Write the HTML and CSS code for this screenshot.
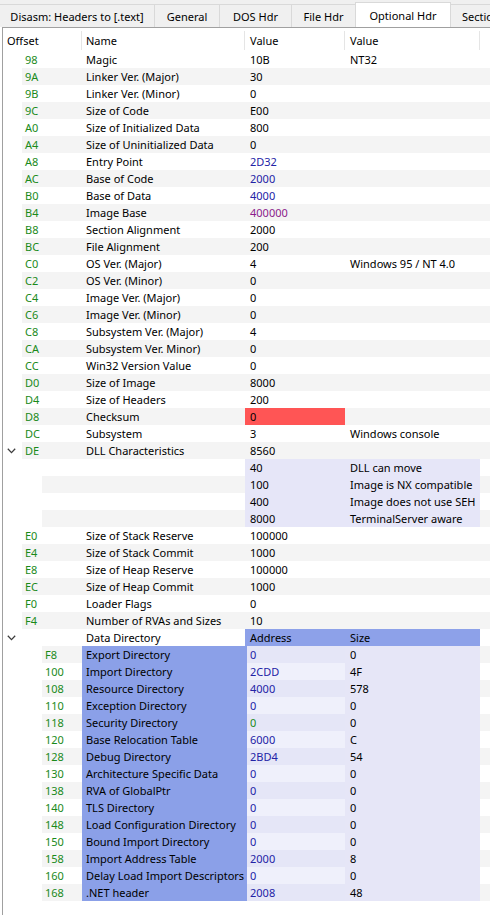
FILE: index.html
```html
<!DOCTYPE html>
<html lang="en">
<head>
    <meta charset="UTF-8">
    <title>Optional Hdr</title>
    <link rel="stylesheet" href="styles.css">
</head>
<body>
    <div class="tabbar">
        <div class="tab t-disasm">Disasm: Headers to [.text]</div>
        <div class="tab t-general">General</div>
        <div class="tab t-dos">DOS Hdr</div>
        <div class="tab t-file">File Hdr</div>
        <div class="tab t-opt active">Optional Hdr</div>
        <div class="tab t-sect">Section Hdrs</div>
    </div>

    <div class="panel">
        <div class="head">
            <div class="h h-off">Offset</div>
            <div class="h h-name">Name</div>
            <div class="h h-val">Value</div>
            <div class="h h-val2">Value</div>
            <div class="h-fill"></div>
        </div>

        <div class="rows">
            <div class="row"><span class="ind"></span><div class="cells"><span class="off">98</span><span class="name">Magic</span><span class="val">10B</span><span class="val2">NT32</span><span class="fill"></span></div></div>
            <div class="row"><span class="ind"></span><div class="cells"><span class="off">9A</span><span class="name">Linker Ver. (Major)</span><span class="val">30</span><span class="val2"></span><span class="fill"></span></div></div>
            <div class="row"><span class="ind"></span><div class="cells"><span class="off">9B</span><span class="name">Linker Ver. (Minor)</span><span class="val">0</span><span class="val2"></span><span class="fill"></span></div></div>
            <div class="row"><span class="ind"></span><div class="cells"><span class="off">9C</span><span class="name">Size of Code</span><span class="val">E00</span><span class="val2"></span><span class="fill"></span></div></div>
            <div class="row"><span class="ind"></span><div class="cells"><span class="off">A0</span><span class="name">Size of Initialized Data</span><span class="val">800</span><span class="val2"></span><span class="fill"></span></div></div>
            <div class="row"><span class="ind"></span><div class="cells"><span class="off">A4</span><span class="name">Size of Uninitialized Data</span><span class="val">0</span><span class="val2"></span><span class="fill"></span></div></div>
            <div class="row"><span class="ind"></span><div class="cells"><span class="off">A8</span><span class="name">Entry Point</span><span class="val blue">2D32</span><span class="val2"></span><span class="fill"></span></div></div>
            <div class="row"><span class="ind"></span><div class="cells"><span class="off">AC</span><span class="name">Base of Code</span><span class="val blue">2000</span><span class="val2"></span><span class="fill"></span></div></div>
            <div class="row"><span class="ind"></span><div class="cells"><span class="off">B0</span><span class="name">Base of Data</span><span class="val blue">4000</span><span class="val2"></span><span class="fill"></span></div></div>
            <div class="row"><span class="ind"></span><div class="cells"><span class="off">B4</span><span class="name">Image Base</span><span class="val purple">400000</span><span class="val2"></span><span class="fill"></span></div></div>
            <div class="row"><span class="ind"></span><div class="cells"><span class="off">B8</span><span class="name">Section Alignment</span><span class="val">2000</span><span class="val2"></span><span class="fill"></span></div></div>
            <div class="row"><span class="ind"></span><div class="cells"><span class="off">BC</span><span class="name">File Alignment</span><span class="val">200</span><span class="val2"></span><span class="fill"></span></div></div>
            <div class="row"><span class="ind"></span><div class="cells"><span class="off">C0</span><span class="name">OS Ver. (Major)</span><span class="val">4</span><span class="val2">Windows 95 / NT 4.0</span><span class="fill"></span></div></div>
            <div class="row"><span class="ind"></span><div class="cells"><span class="off">C2</span><span class="name">OS Ver. (Minor)</span><span class="val">0</span><span class="val2"></span><span class="fill"></span></div></div>
            <div class="row"><span class="ind"></span><div class="cells"><span class="off">C4</span><span class="name">Image Ver. (Major)</span><span class="val">0</span><span class="val2"></span><span class="fill"></span></div></div>
            <div class="row"><span class="ind"></span><div class="cells"><span class="off">C6</span><span class="name">Image Ver. (Minor)</span><span class="val">0</span><span class="val2"></span><span class="fill"></span></div></div>
            <div class="row"><span class="ind"></span><div class="cells"><span class="off">C8</span><span class="name">Subsystem Ver. (Major)</span><span class="val">4</span><span class="val2"></span><span class="fill"></span></div></div>
            <div class="row"><span class="ind"></span><div class="cells"><span class="off">CA</span><span class="name">Subsystem Ver. Minor)</span><span class="val">0</span><span class="val2"></span><span class="fill"></span></div></div>
            <div class="row"><span class="ind"></span><div class="cells"><span class="off">CC</span><span class="name">Win32 Version Value</span><span class="val">0</span><span class="val2"></span><span class="fill"></span></div></div>
            <div class="row"><span class="ind"></span><div class="cells"><span class="off">D0</span><span class="name">Size of Image</span><span class="val">8000</span><span class="val2"></span><span class="fill"></span></div></div>
            <div class="row"><span class="ind"></span><div class="cells"><span class="off">D4</span><span class="name">Size of Headers</span><span class="val">200</span><span class="val2"></span><span class="fill"></span></div></div>
            <div class="row"><span class="ind"></span><div class="cells"><span class="off">D8</span><span class="name">Checksum</span><span class="val bad">0</span><span class="val2"></span><span class="fill"></span></div></div>
            <div class="row"><span class="ind"></span><div class="cells"><span class="off">DC</span><span class="name">Subsystem</span><span class="val">3</span><span class="val2">Windows console</span><span class="fill"></span></div></div>
            <div class="row"><span class="ind"><svg class="chev" width="9" height="6" viewBox="0 0 9 6"><polyline points="0.8,0.8 4.5,4.6 8.2,0.8" /></svg></span><div class="cells"><span class="off">DE</span><span class="name">DLL Characteristics</span><span class="val">8560</span><span class="val2"></span><span class="fill"></span></div></div>
            <!-- DLL characteristics flags -->
            <div class="row flag"><span class="ind l2"></span><div class="cells"><span class="off"></span><span class="name"></span><span class="val">40</span><span class="val2">DLL can move</span><span class="fill"></span></div></div>
            <div class="row flag"><span class="ind l2"></span><div class="cells"><span class="off"></span><span class="name"></span><span class="val">100</span><span class="val2">Image is NX compatible</span><span class="fill"></span></div></div>
            <div class="row flag"><span class="ind l2"></span><div class="cells"><span class="off"></span><span class="name"></span><span class="val">400</span><span class="val2">Image does not use SEH</span><span class="fill"></span></div></div>
            <div class="row flag"><span class="ind l2"></span><div class="cells"><span class="off"></span><span class="name"></span><span class="val">8000</span><span class="val2">TerminalServer aware</span><span class="fill"></span></div></div>
            <div class="row"><span class="ind"></span><div class="cells"><span class="off">E0</span><span class="name">Size of Stack Reserve</span><span class="val">100000</span><span class="val2"></span><span class="fill"></span></div></div>
            <div class="row"><span class="ind"></span><div class="cells"><span class="off">E4</span><span class="name">Size of Stack Commit</span><span class="val">1000</span><span class="val2"></span><span class="fill"></span></div></div>
            <div class="row"><span class="ind"></span><div class="cells"><span class="off">E8</span><span class="name">Size of Heap Reserve</span><span class="val">100000</span><span class="val2"></span><span class="fill"></span></div></div>
            <div class="row"><span class="ind"></span><div class="cells"><span class="off">EC</span><span class="name">Size of Heap Commit</span><span class="val">1000</span><span class="val2"></span><span class="fill"></span></div></div>
            <div class="row"><span class="ind"></span><div class="cells"><span class="off">F0</span><span class="name">Loader Flags</span><span class="val">0</span><span class="val2"></span><span class="fill"></span></div></div>
            <div class="row"><span class="ind"></span><div class="cells"><span class="off">F4</span><span class="name">Number of RVAs and Sizes</span><span class="val">10</span><span class="val2"></span><span class="fill"></span></div></div>
            <div class="row dirhead"><span class="ind"><svg class="chev" width="9" height="6" viewBox="0 0 9 6"><polyline points="0.8,0.8 4.5,4.6 8.2,0.8" /></svg></span><div class="cells"><span class="off"></span><span class="name">Data Directory</span><span class="val">Address</span><span class="val2">Size</span><span class="fill"></span></div></div>
            <!-- data directory entries -->
            <div class="row dir"><span class="ind l2"></span><div class="cells"><span class="off">F8</span><span class="name">Export Directory</span><span class="val blue">0</span><span class="val2">0</span><span class="fill"></span></div></div>
            <div class="row dir"><span class="ind l2"></span><div class="cells"><span class="off">100</span><span class="name">Import Directory</span><span class="val blue">2CDD</span><span class="val2">4F</span><span class="fill"></span></div></div>
            <div class="row dir"><span class="ind l2"></span><div class="cells"><span class="off">108</span><span class="name">Resource Directory</span><span class="val blue">4000</span><span class="val2">578</span><span class="fill"></span></div></div>
            <div class="row dir"><span class="ind l2"></span><div class="cells"><span class="off">110</span><span class="name">Exception Directory</span><span class="val blue">0</span><span class="val2">0</span><span class="fill"></span></div></div>
            <div class="row dir"><span class="ind l2"></span><div class="cells"><span class="off">118</span><span class="name">Security Directory</span><span class="val green">0</span><span class="val2">0</span><span class="fill"></span></div></div>
            <div class="row dir"><span class="ind l2"></span><div class="cells"><span class="off">120</span><span class="name">Base Relocation Table</span><span class="val blue">6000</span><span class="val2">C</span><span class="fill"></span></div></div>
            <div class="row dir"><span class="ind l2"></span><div class="cells"><span class="off">128</span><span class="name">Debug Directory</span><span class="val blue">2BD4</span><span class="val2">54</span><span class="fill"></span></div></div>
            <div class="row dir"><span class="ind l2"></span><div class="cells"><span class="off">130</span><span class="name">Architecture Specific Data</span><span class="val blue">0</span><span class="val2">0</span><span class="fill"></span></div></div>
            <div class="row dir"><span class="ind l2"></span><div class="cells"><span class="off">138</span><span class="name">RVA of GlobalPtr</span><span class="val blue">0</span><span class="val2">0</span><span class="fill"></span></div></div>
            <div class="row dir"><span class="ind l2"></span><div class="cells"><span class="off">140</span><span class="name">TLS Directory</span><span class="val blue">0</span><span class="val2">0</span><span class="fill"></span></div></div>
            <div class="row dir"><span class="ind l2"></span><div class="cells"><span class="off">148</span><span class="name">Load Configuration Directory</span><span class="val blue">0</span><span class="val2">0</span><span class="fill"></span></div></div>
            <div class="row dir"><span class="ind l2"></span><div class="cells"><span class="off">150</span><span class="name">Bound Import Directory</span><span class="val blue">0</span><span class="val2">0</span><span class="fill"></span></div></div>
            <div class="row dir"><span class="ind l2"></span><div class="cells"><span class="off">158</span><span class="name">Import Address Table</span><span class="val blue">2000</span><span class="val2">8</span><span class="fill"></span></div></div>
            <div class="row dir"><span class="ind l2"></span><div class="cells"><span class="off">160</span><span class="name">Delay Load Import Descriptors</span><span class="val blue">0</span><span class="val2">0</span><span class="fill"></span></div></div>
            <div class="row dir"><span class="ind l2"></span><div class="cells"><span class="off">168</span><span class="name">.NET header</span><span class="val blue">2008</span><span class="val2">48</span><span class="fill"></span></div></div>
        </div>
    </div>
</body>
</html>
```

FILE: styles.css
```css
body {
    margin: 0;
    font-family: "Noto Sans", sans-serif;
    font-size: 11px;
    color: #000;
    background-color: #fff;
    height: 915px;
    overflow: hidden;
}

/* tab strip */
.tabbar {
    display: flex;
    align-items: flex-end;
    height: 27px;
    background-color: #f0f0f0;
    white-space: nowrap;
    overflow: hidden;
}
.tab {
    flex: none;
    height: 23px;
    box-sizing: border-box;
    display: flex;
    align-items: center;
    justify-content: center;
    background-color: #f0f0f0;
    border-top: 1px solid #d9d9d9;
    border-right: 1px solid #d9d9d9;
}
.tab.active {
    height: 25px;
    background-color: #fff;
    border-left: 1px solid #d9d9d9;
    margin-left: -1px;
}
.t-disasm { width: 155px; }
.t-general { width: 65px; }
.t-dos { width: 72px; }
.t-file { width: 64px; }
.t-opt { width: 96px; }
.t-sect { width: 90px; justify-content: flex-start; padding-left: 11px; }

/* tree view */
.panel {
    margin-left: 2px;
    border-left: 1px solid #a0a0a0;
    border-top: 1px solid #a0a0a0;
    height: 888px;
}
.head {
    display: flex;
    height: 23px;
    align-items: center;
}
.h {
    flex: none;
    box-sizing: border-box;
    height: 19px;
    line-height: 19px;
    margin-top: 2px;
    border-right: 1px solid #e5e5e5;
}
.h-off { width: 79px; padding-left: 4px; }
.h-name { width: 163px; padding-left: 4px; }
.h-val { width: 100px; padding-left: 5px; }
.h-val2 { width: 135px; padding-left: 5px; }
.h-fill { flex: 1; }

.row {
    display: flex;
    height: 17px;
    line-height: 17px;
    white-space: nowrap;
}
.ind {
    flex: none;
    width: 19px;
    display: flex;
    align-items: center;
    justify-content: center;
    padding-right: 3px;
    box-sizing: border-box;
}
.ind.l2 { width: 39px; }
.chev {
    fill: none;
    stroke: #3c3c3c;
    stroke-width: 1.3;
}
.cells {
    flex: 1;
    display: flex;
}
.row:nth-child(even) .cells {
    background-color: #f4f4f4;
}
.off {
    flex: 1;
    padding-left: 3px;
    color: #1a8a1a;
}
.name, .val, .val2 {
    flex: none;
    overflow: hidden;
    box-sizing: border-box;
}
.name { width: 163px; padding-left: 4px; }
.val { width: 100px; padding-left: 5px; }
.val2 { width: 135px; padding-left: 5px; }
.fill { flex: none; width: 10px; }

.blue { color: #2323a6; }
.purple { color: #8b1c8b; }
.green { color: #1a8a1a; }
.bad { background-color: #ff5555; }

/* DLL characteristic flags */
.flag .val, .flag .val2 {
    background-color: #e6e6f8;
}

/* data directory */
.dirhead .val, .dirhead .val2 {
    background-color: #8da1e9;
}
.dir .name {
    background-color: #8ba0e8;
}
.dir .val {
    background-color: #eff0fb;
    box-shadow: inset 2px 0 0 #8ba0e8;
}
.dir:nth-child(even) .val {
    background-color: #e5e6f7;
}
.dir .val2 {
    background-color: #e6e6f7;
}
```
